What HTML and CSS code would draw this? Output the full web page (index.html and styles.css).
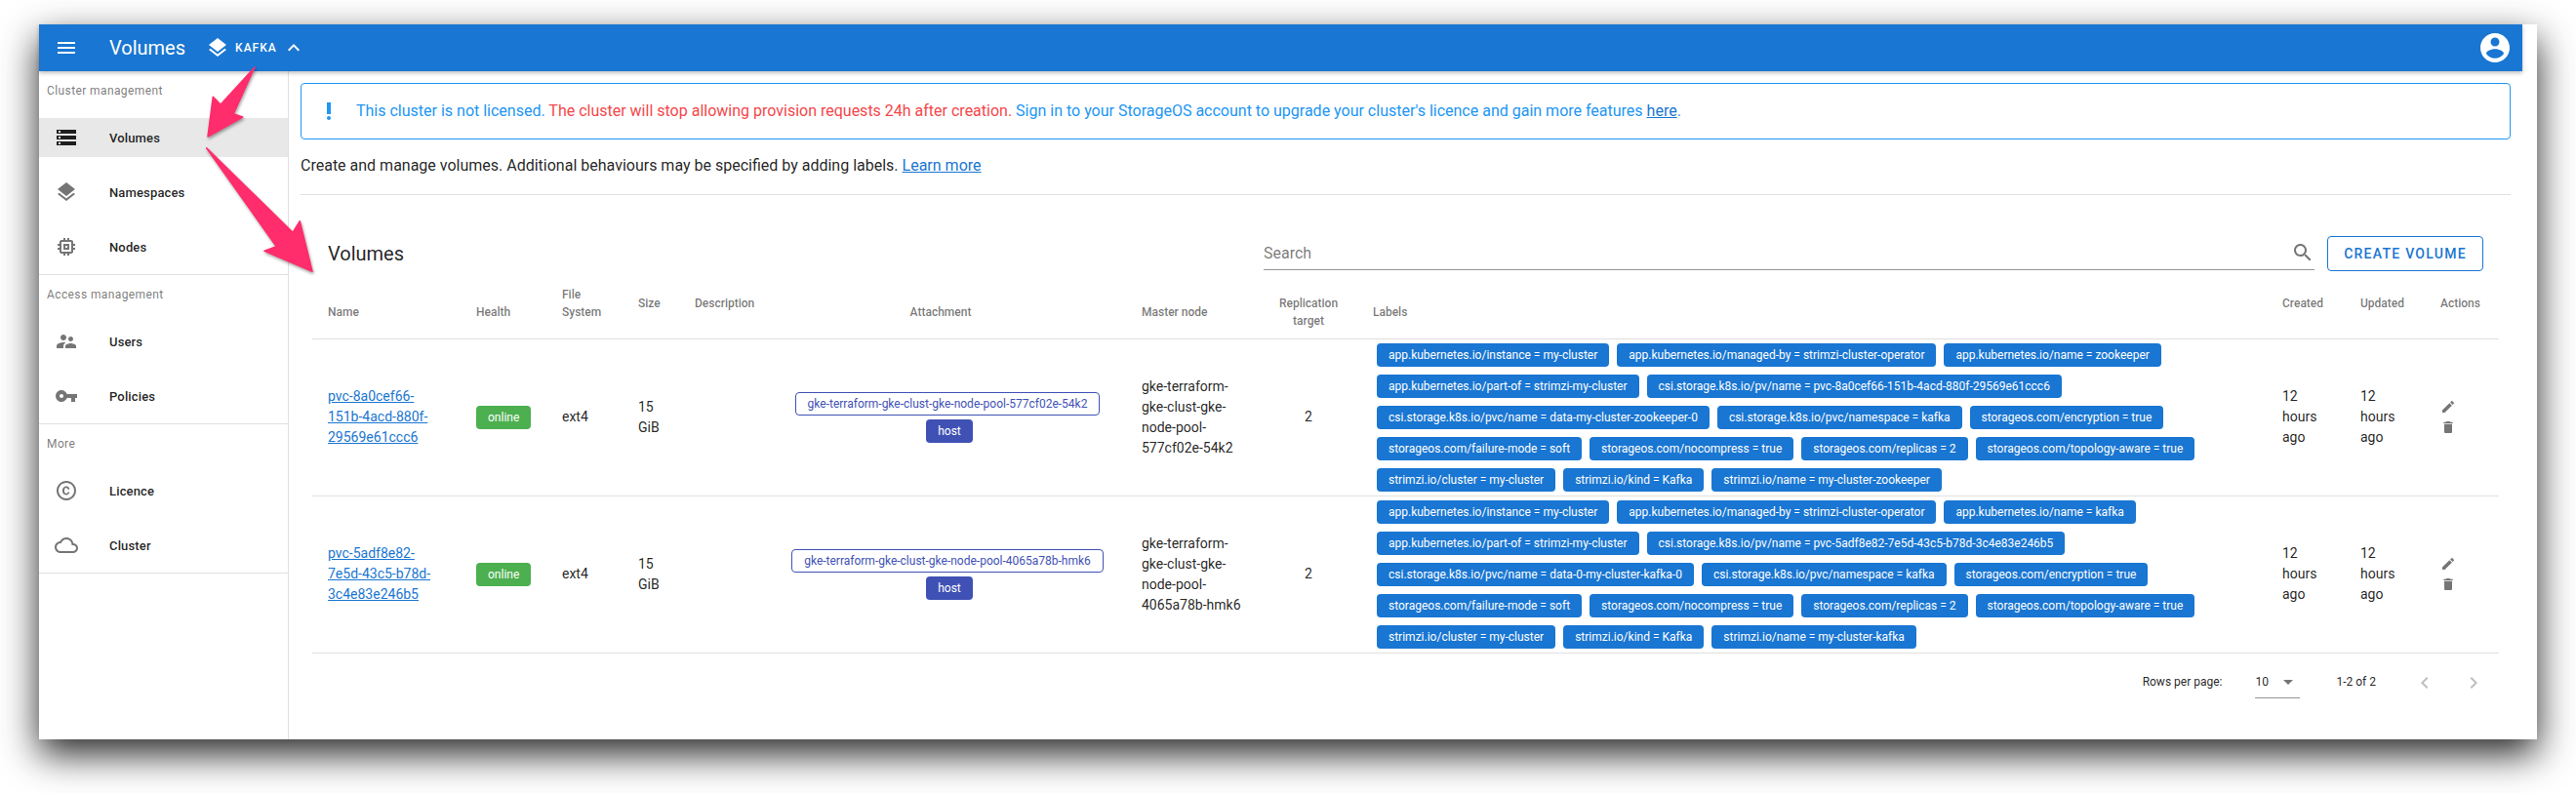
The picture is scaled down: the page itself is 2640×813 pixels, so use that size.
FILE: index.html
```html
<!DOCTYPE html>
<html lang="en">
<head>
<meta charset="utf-8">
<title>Volumes</title>
<link rel="stylesheet" href="styles.css">
</head>
<body>
<svg class="defs" aria-hidden="true">
  <symbol id="i-menu" viewBox="0 0 24 24"><path d="M3 18h18v-2H3v2zm0-5h18v-2H3v2zm0-7v2h18V6H3z"/></symbol>
  <symbol id="i-layers" viewBox="0 0 24 24"><path d="M11.99 18.54l-7.37-5.73L3 14.07l9 7 9-7-1.63-1.27-7.38 5.74zM12 16l7.36-5.73L21 9l-9-7-9 7 1.63 1.27L12 16z"/></symbol>
  <symbol id="i-less" viewBox="0 0 24 24"><path d="M12 8l-6 6 1.41 1.41L12 10.83l4.59 4.58L18 14z"/></symbol>
  <symbol id="i-account" viewBox="0 0 24 24"><path d="M12 2C6.48 2 2 6.48 2 12s4.48 10 10 10 10-4.48 10-10S17.52 2 12 2zm0 3c1.66 0 3 1.34 3 3s-1.34 3-3 3-3-1.34-3-3 1.34-3 3-3zm0 14.2c-2.5 0-4.71-1.28-6-3.22.03-1.99 4-3.08 6-3.08 1.99 0 5.97 1.09 6 3.08-1.29 1.94-3.5 3.22-6 3.22z"/></symbol>
  <symbol id="i-storage" viewBox="0 0 24 24"><path d="M2 20h20v-4H2v4zm2-3h2v2H4v-2zM2 4v4h20V4H2zm4 3H4V5h2v2zm-4 7h20v-4H2v4zm2-3h2v2H4v-2z"/></symbol>
  <symbol id="i-memory" viewBox="0 0 24 24"><path d="M15 9H9v6h6V9zm-2 4h-2v-2h2v2zm8-2V9h-2V7c0-1.1-.9-2-2-2h-2V3h-2v2h-2V3H9v2H7c-1.1 0-2 .9-2 2v2H3v2h2v2H3v2h2v2c0 1.1.9 2 2 2h2v2h2v-2h2v2h2v-2h2c1.1 0 2-.9 2-2v-2h2v-2h-2v-2h2zm-4 6H7V7h10v10z"/></symbol>
  <symbol id="i-users" viewBox="0 0 24 24"><path d="M16.5 12c1.38 0 2.49-1.12 2.49-2.5S17.88 7 16.5 7C15.12 7 14 8.12 14 9.5s1.12 2.5 2.5 2.5zM9 11c1.66 0 2.99-1.34 2.99-3S10.66 5 9 5C7.34 5 6 6.34 6 8s1.34 3 3 3zm7.5 3c-1.83 0-5.5.92-5.5 2.75V19h11v-2.25c0-1.83-3.67-2.75-5.5-2.75zM9 13c-2.33 0-7 1.17-7 3.5V19h7v-2.25c0-.85.33-2.34 2.37-3.47C10.5 13.1 9.66 13 9 13z"/></symbol>
  <symbol id="i-key" viewBox="0 0 24 24"><path d="M12.65 10C11.83 7.67 9.61 6 7 6c-3.31 0-6 2.69-6 6s2.69 6 6 6c2.61 0 4.83-1.67 5.65-4H17v4h4v-4h2v-4H12.65zM7 14c-1.1 0-2-.9-2-2s.9-2 2-2 2 .9 2 2-.9 2-2 2z"/></symbol>
  <symbol id="i-copyright" viewBox="0 0 24 24"><path d="M10.08 10.86c.05-.33.16-.62.3-.87s.34-.46.59-.62c.24-.15.54-.22.91-.23.23.01.44.05.63.13.2.09.38.21.52.36s.25.33.34.53.13.42.14.64h1.79c-.02-.47-.11-.9-.28-1.29s-.4-.73-.7-1.01-.66-.5-1.08-.66-.88-.23-1.39-.23c-.65 0-1.22.11-1.7.34s-.88.53-1.2.92-.56.84-.71 1.36S8 11.29 8 11.87v.27c0 .58.08 1.12.23 1.64s.39.97.71 1.35.72.69 1.2.91 1.05.34 1.7.34c.47 0 .91-.08 1.32-.23s.77-.36 1.08-.63.56-.58.74-.94.29-.74.3-1.15h-1.79c-.01.21-.06.4-.15.58s-.21.33-.36.46-.32.23-.52.3c-.19.07-.39.09-.6.1-.36-.01-.66-.08-.89-.23-.25-.16-.45-.37-.59-.62s-.25-.55-.3-.88-.08-.67-.08-1v-.27c0-.35.03-.68.08-1.01zM12 2C6.48 2 2 6.48 2 12s4.48 10 10 10 10-4.48 10-10S17.52 2 12 2zm0 18c-4.41 0-8-3.59-8-8s3.59-8 8-8 8 3.59 8 8-3.59 8-8 8z"/></symbol>
  <symbol id="i-cloud" viewBox="0 0 24 24"><path d="M19.35 10.04C18.67 6.59 15.64 4 12 4 9.11 4 6.6 5.64 5.35 8.04 2.34 8.36 0 10.91 0 14c0 3.31 2.69 6 6 6h13c2.76 0 5-2.24 5-5 0-2.64-2.05-4.78-4.65-4.96zM19 18H6c-2.21 0-4-1.79-4-4s1.79-4 4-4h.71C7.37 7.69 9.48 6 12 6c3.04 0 5.5 2.46 5.5 5.5v.5H19c1.66 0 3 1.34 3 3s-1.34 3-3 3z"/></symbol>
  <symbol id="i-search" viewBox="0 0 24 24"><path d="M15.5 14h-.79l-.28-.27C15.41 12.59 16 11.11 16 9.5 16 5.91 13.09 3 9.5 3S3 5.91 3 9.5 5.91 16 9.5 16c1.61 0 3.09-.59 4.23-1.57l.27.28v.79l5 4.99L20.49 19l-4.99-5zm-6 0C7.01 14 5 11.99 5 9.5S7.01 5 9.5 5 14 7.01 14 9.5 11.99 14 9.5 14z"/></symbol>
  <symbol id="i-edit" viewBox="0 0 24 24"><path d="M3 17.25V21h3.75L17.81 9.94l-3.75-3.75L3 17.25zM20.71 7.04c.39-.39.39-1.02 0-1.41l-2.34-2.34c-.39-.39-1.02-.39-1.41 0l-1.83 1.83 3.75 3.75 1.83-1.83z"/></symbol>
  <symbol id="i-delete" viewBox="0 0 24 24"><path d="M6 19c0 1.1.9 2 2 2h8c1.1 0 2-.9 2-2V7H6v12zM19 4h-3.5l-1-1h-5l-1 1H5v2h14V4z"/></symbol>
  <symbol id="i-drop" viewBox="0 0 24 24"><path d="M7 10l5 5 5-5z"/></symbol>
  <symbol id="i-prev" viewBox="0 0 24 24"><path d="M15.41 7.41L14 6l-6 6 6 6 1.41-1.41L10.83 12z"/></symbol>
  <symbol id="i-next" viewBox="0 0 24 24"><path d="M10 6L8.59 7.41 13.17 12l-4.58 4.59L10 18l6-6z"/></symbol>
  <symbol id="i-alert" viewBox="0 0 24 24"><circle cx="12" cy="19" r="2"/><path d="M10 3h4v12h-4z"/></symbol>
</svg>

<div class="window">
  <header class="appbar">
    <svg class="icon appbar-menu"><use href="#i-menu"/></svg>
    <span class="appbar-title">Volumes</span>
    <svg class="icon appbar-layers"><use href="#i-layers"/></svg>
    <span class="appbar-cluster">KAFKA</span>
    <svg class="icon appbar-chevron"><use href="#i-less"/></svg>
    <svg class="appbar-account"><use href="#i-account"/></svg>
  </header>
  <div class="content">
    <nav class="sidebar">
      <section class="nav-section">
        <div class="nav-heading">Cluster management</div>
        <a class="nav-item is-selected"><svg class="icon"><use href="#i-storage"/></svg><span>Volumes</span></a>
        <a class="nav-item"><svg class="icon"><use href="#i-layers"/></svg><span>Namespaces</span></a>
        <a class="nav-item"><svg class="icon"><use href="#i-memory"/></svg><span>Nodes</span></a>
      </section>
      <section class="nav-section">
        <div class="nav-heading">Access management</div>
        <a class="nav-item"><svg class="icon"><use href="#i-users"/></svg><span>Users</span></a>
        <a class="nav-item"><svg class="icon"><use href="#i-key"/></svg><span>Policies</span></a>
      </section>
      <section class="nav-section">
        <div class="nav-heading">More</div>
        <a class="nav-item"><svg class="icon"><use href="#i-copyright"/></svg><span>Licence</span></a>
        <a class="nav-item"><svg class="icon"><use href="#i-cloud"/></svg><span>Cluster</span></a>
      </section>
    </nav>
    <main class="main">
      <div class="alert">
        <svg class="icon alert-icon"><use href="#i-alert"/></svg>
        <p class="alert-text">This cluster is not licensed. <span class="alert-danger">The cluster will stop allowing provision requests 24h after creation.</span> Sign in to your StorageOS account to upgrade your cluster's licence and gain more features <a class="alert-link">here</a>.</p>
      </div>
      <p class="intro">Create and manage volumes. Additional behaviours may be specified by adding labels. <a class="link">Learn more</a></p>
      <div class="card">
        <div class="toolbar">
          <h2 class="toolbar-title">Volumes</h2>
          <div class="search">
            <span class="search-placeholder">Search</span>
            <svg class="icon search-icon"><use href="#i-search"/></svg>
          </div>
          <button class="button-outlined">CREATE VOLUME</button>
        </div>
        <table class="table">
          <colgroup>
            <col class="c-name"><col class="c-health"><col class="c-fs"><col class="c-size"><col class="c-desc"><col class="c-attach"><col class="c-master"><col class="c-repl"><col class="c-labels"><col class="c-created"><col class="c-updated"><col class="c-actions">
          </colgroup>
          <thead>
            <tr>
              <th>Name</th>
              <th>Health</th>
              <th>File System</th>
              <th class="th-raised">Size</th>
              <th class="th-raised">Description</th>
              <th class="center">Attachment</th>
              <th>Master node</th>
              <th class="center th-low">Replication target</th>
              <th>Labels</th>
              <th class="th-raised">Created</th>
              <th class="th-raised">Updated</th>
              <th class="th-raised">Actions</th>
            </tr>
          </thead>
          <tbody>
            <tr>
              <td><a class="link">pvc-8a0cef66-151b-4acd-880f-29569e61ccc6</a></td>
              <td><span class="chip chip-green">online</span></td>
              <td>ext4</td>
              <td>15 GiB</td>
              <td></td>
              <td class="center td-attach">
                <div class="attach">
                  <span class="chip chip-outlined">gke-terraform-gke-clust-gke-node-pool-577cf02e-54k2</span>
                  <span class="chip chip-indigo">host</span>
                </div>
              </td>
              <td>gke-terraform-gke-clust-gke-node-pool-577cf02e-54k2</td>
              <td class="center">2</td>
              <td class="td-labels">
                <div class="labels">
                  <span class="chip chip-blue">app.kubernetes.io/instance = my-cluster</span>
                  <span class="chip chip-blue">app.kubernetes.io/managed-by = strimzi-cluster-operator</span>
                  <span class="chip chip-blue">app.kubernetes.io/name = zookeeper</span>
                  <span class="chip chip-blue">app.kubernetes.io/part-of = strimzi-my-cluster</span>
                  <span class="chip chip-blue">csi.storage.k8s.io/pv/name = pvc-8a0cef66-151b-4acd-880f-29569e61ccc6</span>
                  <span class="chip chip-blue">csi.storage.k8s.io/pvc/name = data-my-cluster-zookeeper-0</span>
                  <span class="chip chip-blue">csi.storage.k8s.io/pvc/namespace = kafka</span>
                  <span class="chip chip-blue">storageos.com/encryption = true</span>
                  <span class="chip chip-blue">storageos.com/failure-mode = soft</span>
                  <span class="chip chip-blue">storageos.com/nocompress = true</span>
                  <span class="chip chip-blue">storageos.com/replicas = 2</span>
                  <span class="chip chip-blue">storageos.com/topology-aware = true</span>
                  <span class="chip chip-blue">strimzi.io/cluster = my-cluster</span>
                  <span class="chip chip-blue">strimzi.io/kind = Kafka</span>
                  <span class="chip chip-blue">strimzi.io/name = my-cluster-zookeeper</span>
                </div>
              </td>
              <td>12 hours ago</td>
              <td>12 hours ago</td>
              <td><div class="actions"><svg class="action-icon"><use href="#i-edit"/></svg><svg class="action-icon"><use href="#i-delete"/></svg></div></td>
            </tr>
            <tr>
              <td><a class="link">pvc-5adf8e82-7e5d-43c5-b78d-3c4e83e246b5</a></td>
              <td><span class="chip chip-green">online</span></td>
              <td>ext4</td>
              <td>15 GiB</td>
              <td></td>
              <td class="center td-attach">
                <div class="attach">
                  <span class="chip chip-outlined">gke-terraform-gke-clust-gke-node-pool-4065a78b-hmk6</span>
                  <span class="chip chip-indigo">host</span>
                </div>
              </td>
              <td>gke-terraform-gke-clust-gke-node-pool-4065a78b-hmk6</td>
              <td class="center">2</td>
              <td class="td-labels">
                <div class="labels">
                  <span class="chip chip-blue">app.kubernetes.io/instance = my-cluster</span>
                  <span class="chip chip-blue">app.kubernetes.io/managed-by = strimzi-cluster-operator</span>
                  <span class="chip chip-blue">app.kubernetes.io/name = kafka</span>
                  <span class="chip chip-blue">app.kubernetes.io/part-of = strimzi-my-cluster</span>
                  <span class="chip chip-blue">csi.storage.k8s.io/pv/name = pvc-5adf8e82-7e5d-43c5-b78d-3c4e83e246b5</span>
                  <span class="chip chip-blue">csi.storage.k8s.io/pvc/name = data-0-my-cluster-kafka-0</span>
                  <span class="chip chip-blue">csi.storage.k8s.io/pvc/namespace = kafka</span>
                  <span class="chip chip-blue">storageos.com/encryption = true</span>
                  <span class="chip chip-blue">storageos.com/failure-mode = soft</span>
                  <span class="chip chip-blue">storageos.com/nocompress = true</span>
                  <span class="chip chip-blue">storageos.com/replicas = 2</span>
                  <span class="chip chip-blue">storageos.com/topology-aware = true</span>
                  <span class="chip chip-blue">strimzi.io/cluster = my-cluster</span>
                  <span class="chip chip-blue">strimzi.io/kind = Kafka</span>
                  <span class="chip chip-blue">strimzi.io/name = my-cluster-kafka</span>
                </div>
              </td>
              <td>12 hours ago</td>
              <td>12 hours ago</td>
              <td><div class="actions"><svg class="action-icon"><use href="#i-edit"/></svg><svg class="action-icon"><use href="#i-delete"/></svg></div></td>
            </tr>
          </tbody>
        </table>
        <div class="pagination">
          <span class="pagination-label">Rows per page:</span>
          <div class="page-select"><span>10</span><svg class="icon page-drop"><use href="#i-drop"/></svg></div>
          <span class="pagination-range">1-2 of 2</span>
          <svg class="icon page-arrow page-prev"><use href="#i-prev"/></svg>
          <svg class="icon page-arrow"><use href="#i-next"/></svg>
        </div>
      </div>
    </main>
  </div>
</div>

<svg class="arrows" viewBox="0 0 2640 813" aria-hidden="true">
  <polygon class="arrow" points="261,69 239.3,116.7 248.7,120 213,140 218.3,99.3 226,107.3"/>
  <polygon class="arrow" points="211.7,151.7 300,238.3 307.3,226.7 320,278.3 271,257.3 283.3,252.7"/>
</svg>
</body>
</html>
```
FILE: styles.css
```css
* { box-sizing: border-box; }
html, body { margin: 0; height: 813px; overflow: hidden; background: #fff; }
body {
  position: relative;
  padding: 25px 40px 0;
  font-family: Roboto, "Liberation Sans", sans-serif;
  font-size: 14px;
  line-height: 21px;
  color: rgba(0, 0, 0, .87);
}
p, h2 { margin: 0; }
.defs { display: none; }
.icon { width: 24px; height: 24px; flex: none; fill: currentColor; }

.window {
  width: 2560px;
  height: 733px;
  padding-right: 15px;
  background: #fff;
  box-shadow: 0 15px 36px rgba(0, 0, 0, .85);
  display: flex;
  flex-direction: column;
}

.appbar {
  height: 48px;
  flex: none;
  padding: 0 10px 0 16px;
  background: #1976d2;
  color: #fff;
  display: flex;
  align-items: center;
  box-shadow: 0 2px 4px rgba(0, 0, 0, .25);
  position: relative;
}
.appbar-title { margin-left: 32px; font-size: 20px; line-height: 28px; }
.appbar-layers { margin-left: 21px; }
.appbar-cluster { margin-left: 6px; font-size: 12px; font-weight: 500; letter-spacing: 1px; }
.appbar-chevron { margin-left: 5px; }
.appbar-account { width: 36px; height: 36px; margin-left: auto; fill: #fff; }

.content { flex: 1; display: flex; min-height: 0; }

.sidebar { width: 256px; flex: none; border-right: 1px solid #e0e0e0; }
.nav-section { padding-top: 10px; border-bottom: 1px solid #e0e0e0; padding-bottom: 8px; }
.nav-heading {
  padding-left: 8px;
  margin-bottom: 18px;
  font-size: 12px;
  line-height: 20px;
  letter-spacing: .4px;
  color: rgba(0, 0, 0, .54);
}
.nav-item {
  height: 40px;
  margin-bottom: 16px;
  padding-left: 16px;
  display: flex;
  align-items: center;
  font-size: 13px;
  font-weight: 500;
  letter-spacing: .15px;
  color: rgba(0, 0, 0, .87);
}
.nav-item:last-child { margin-bottom: 0; }
.nav-item .icon { color: rgba(0, 0, 0, .54); margin-right: 32px; }
.nav-item.is-selected { background: #e8e8e8; }
.nav-item.is-selected .icon { color: rgba(0, 0, 0, .87); }

.main { flex: 1; min-width: 0; padding: 12px 12px 0; }

.alert {
  height: 58px;
  padding-left: 16px;
  border: 1px solid #2196f3;
  border-radius: 4px;
  color: #2196f3;
  display: flex;
  align-items: center;
}
.alert-icon { margin-right: 16px; }
.alert-text { font-size: 16px; line-height: 24px; }
.alert-danger { color: #f4474a; }
.alert-link { color: #1976d2; text-decoration: underline; }

.intro {
  margin-top: 15px;
  padding-bottom: 17px;
  border-bottom: 1px solid #e0e0e0;
  font-size: 16px;
  line-height: 24px;
}
.link { color: #1976d2; text-decoration: underline; }

.card { padding: 42px 12px 0; }

.toolbar { height: 36px; padding: 0 16px; display: flex; align-items: flex-start; }
.toolbar-title { font-size: 20px; font-weight: 400; line-height: 36px; }
.search {
  width: 1077px;
  height: 35px;
  margin-left: auto;
  border-bottom: 1px solid #949494;
  display: flex;
  align-items: center;
  justify-content: space-between;
  color: rgba(0, 0, 0, .54);
}
.search-placeholder { font-size: 16px; }
.button-outlined {
  width: 160px;
  height: 36px;
  margin-left: 13px;
  padding: 0;
  border: 1px solid #1976d2;
  border-radius: 4px;
  background: #fff;
  color: #1976d2;
  font: 500 14px/20px Roboto, "Liberation Sans", sans-serif;
  letter-spacing: 1.25px;
}

.table { width: 2241px; table-layout: fixed; border-collapse: collapse; }
.c-name { width: 152px; }
.c-health { width: 88px; }
.c-fs { width: 78px; }
.c-size { width: 58px; }
.c-desc { width: 78px; }
.c-attach { width: 380px; }
.c-master { width: 137px; }
.c-repl { width: 100px; }
.c-labels { width: 932px; }
.c-created { width: 80px; }
.c-updated { width: 82px; }
.c-actions { width: 76px; }

th, td { padding: 0 16px; text-align: left; border-bottom: 1px solid #e0e0e0; }
thead tr { height: 69px; }
th {
  padding-bottom: 18px;
  vertical-align: bottom;
  font-size: 12px;
  line-height: 18px;
  font-weight: 500;
  color: rgba(0, 0, 0, .54);
}
th.th-raised { padding-bottom: 27px; }
th.th-low { padding-bottom: 9px; }
th.center, td.center { text-align: center; }
tbody tr { height: 161px; }
td { vertical-align: middle; }
td.td-attach { padding-left: 30px; }
.td-labels { padding: 4px 16px 4px 20px; }

.chip {
  height: 24px;
  padding: 0 12px;
  border-radius: 4px;
  display: inline-flex;
  align-items: center;
  font-size: 12px;
  line-height: 24px;
  white-space: nowrap;
  color: #fff;
}
.chip-blue { background: #1976d2; }
.chip-green { background: #4caf50; }
.chip-indigo { background: #3f51b5; margin-left: 4px; }
.chip-outlined { border: 1px solid #3f51b5; color: #3f51b5; background: #fff; }

.attach { display: flex; flex-direction: column; align-items: center; gap: 4px; }
.labels { display: flex; flex-wrap: wrap; gap: 8px; }
.actions { display: flex; flex-direction: column; width: 16px; }
.action-icon { width: 16px; height: 16px; margin-bottom: 5px; fill: rgba(0, 0, 0, .54); }
.action-icon:last-child { margin-bottom: 0; }

.pagination {
  height: 60px;
  padding-right: 14px;
  display: flex;
  align-items: center;
  justify-content: flex-end;
  font-size: 12px;
}
.page-select {
  width: 46px;
  height: 33px;
  margin-left: 34px;
  border-bottom: 1px solid rgba(0, 0, 0, .42);
  display: flex;
  align-items: center;
  justify-content: space-between;
}
.page-drop { color: rgba(0, 0, 0, .54); }
.pagination-range { margin-left: 37px; margin-right: 38px; }
.page-arrow { color: rgba(0, 0, 0, .26); }
.page-prev { margin-right: 26px; }

.arrows {
  position: absolute;
  left: 0;
  top: 0;
  width: 2640px;
  height: 813px;
  pointer-events: none;
}
.arrow {
  fill: #ff2d6b;
  stroke: #ff2d6b;
  stroke-width: 1.5;
  stroke-linejoin: round;
  filter: drop-shadow(1px 2px 1.5px rgba(0, 0, 0, .35));
}
```
